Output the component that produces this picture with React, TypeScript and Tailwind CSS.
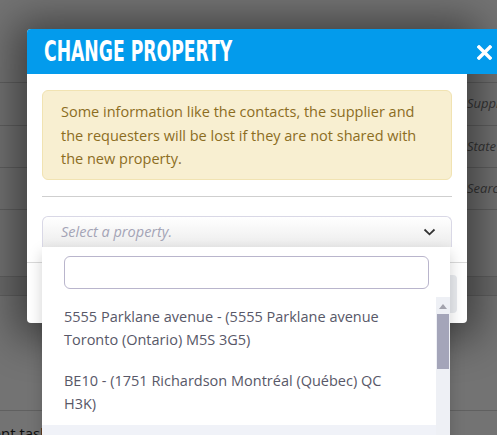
import React from 'react';

const options = [
    '5555 Parklane avenue - (5555 Parklane avenue Toronto (Ontario) M5S 3G5)',
    'BE10 - (1751 Richardson Montréal (Québec) QC H3K)',
    'BE12 - (2000 Peel Montréal (Québec) QC H3A)',
];

function BackgroundPage() {
    // the page behind the modal, mostly hidden by the overlay
    return (
        <div className="flex h-full w-full flex-col bg-white pt-[82px] text-[13px] text-[#777]">
            <div className="flex h-[43px] shrink-0 items-center justify-end border-t border-[#d4d4d4]">
                <span className="w-[30px] italic">Supplier</span>
            </div>
            <div className="flex h-[42px] shrink-0 items-center justify-end border-t border-[#d4d4d4]">
                <span className="w-[30px] italic">State</span>
            </div>
            <div className="flex h-[42px] shrink-0 items-center justify-end border-t border-[#d4d4d4]">
                <span className="w-[30px] italic">Search</span>
            </div>
            <div className="h-[67px] shrink-0 border-t border-[#d4d4d4]" />
            <div className="h-[19px] shrink-0 border-t border-[#d4d4d4] bg-[#eeeeee]" />
            <div className="h-[115px] shrink-0 border-t border-[#d4d4d4]" />
            <div className="shrink-0 whitespace-nowrap border-t border-[#d4d4d4] pt-[12px] text-[15px] leading-[20px] text-[#222]">
                <span className="ml-[-61px]">Equipment tasks</span>
            </div>
        </div>
    );
}

export default function App() {
    return (
        <div className="relative h-[435px] w-[497px] overflow-hidden font-['Open_Sans',sans-serif]">
            <BackgroundPage />
            <div className="absolute inset-0 bg-black/[0.55]" />

            {/* modal */}
            <div className="absolute left-[27px] top-[29px] w-[440px] rounded-[4px] bg-white shadow-[0_4px_40px_12px_rgba(0,0,0,0.45)]">
                <div className="flex h-[45px] w-[470px] items-center justify-between rounded-tl-[4px] bg-[#039bec] pl-[17px] pr-[5px]">
                    <h2 className="origin-left scale-x-[0.66] whitespace-nowrap font-['Liberation_Sans_Narrow','DejaVu_Sans_Condensed',sans-serif] text-[29px] font-bold leading-none text-white">
                        CHANGE PROPERTY
                    </h2>
                    <svg width="15" height="15" viewBox="0 0 15 15" className="mt-[1px]">
                        <path d="M2 2 L13 13 M13 2 L2 13" stroke="white" strokeWidth="3.4" strokeLinecap="square" />
                    </svg>
                </div>

                <div className="px-[15px] pb-[15px] pt-[16px]">
                    <div className="rounded-[6px] border border-[#f1e3b2] bg-[#f8efd1] px-[18px] pb-[8px] pt-[9px] text-[14.5px] leading-[23.5px] text-[#8c6d1f]">
                        Some information like the contacts, the supplier and the requesters will be lost if they are not shared with the new property.
                    </div>
                    <div className="mt-[16px] h-px bg-[#cfcfcf]" />

                    <div className="relative mt-[19px]">
                        <div className="flex h-[31px] items-center justify-between rounded-t-[6px] border border-b-0 border-[#d9d8e6] bg-gradient-to-b from-white to-[#ececec] pl-[18px] pr-[15px]">
                            <span className="text-[14.5px] italic text-[#a4a4b6]">Select a property.</span>
                            <svg width="13" height="8" viewBox="0 0 13 8">
                                <path d="M1.5 1.5 L6.5 6.3 L11.5 1.5" fill="none" stroke="#333" strokeWidth="1.8" />
                            </svg>
                        </div>

                        {/* open dropdown */}
                        <div className="absolute left-0 top-full z-10 w-[408px] bg-white shadow-[0_6px_14px_rgba(0,0,0,0.18)]">
                            <div className="pl-[22px] pr-[21px] pt-[9px]">
                                <input type="text" className="block h-[33px] w-full rounded-[6px] border border-[#b9b5cc] bg-white px-2 text-[14px] outline-none" />
                            </div>
                            <div className="mt-[8px] flex h-[180px]">
                                <ul className="flex-1">
                                    {options.map((o, i) => (
                                        <li
                                            key={o}
                                            className={`px-[22px] py-[9.5px] text-[14.5px] leading-[22.5px] text-[#585868] ${i === 2 ? 'bg-[#f0f2f8]' : ''}`}
                                        >
                                            {o}
                                        </li>
                                    ))}
                                </ul>
                                <div className="flex w-[14px] flex-col items-center bg-[#eef0f5]">
                                    <svg width="8" height="5" viewBox="0 0 8 5" className="mt-[7px]">
                                        <path d="M0 5 L4 0 L8 5 Z" fill="#a3a3ad" />
                                    </svg>
                                    <div className="mt-[5px] h-[55px] w-[12px] bg-[#a4a5b9]" />
                                </div>
                            </div>
                        </div>
                    </div>
                </div>

                <div className="flex justify-end border-t border-[#dadada] pb-[10px] pr-[10px] pt-[12px]">
                    <button className="h-[38px] rounded-[4px] bg-[#e8eaee] px-4 text-[13px] text-[#333]">Cancel</button>
                </div>
            </div>
        </div>
    );
}
